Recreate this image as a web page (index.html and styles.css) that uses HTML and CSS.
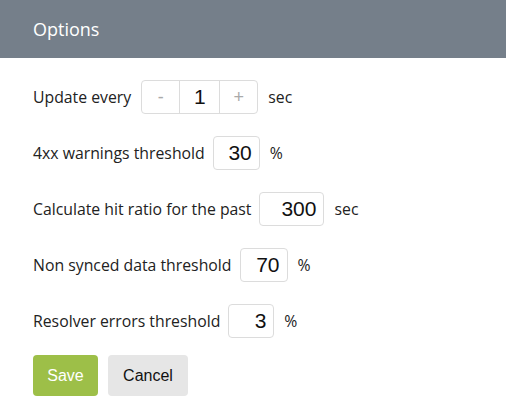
FILE: index.html
```html
<!DOCTYPE html>
<html>
<head>
<meta charset="utf-8">
<link rel="stylesheet" href="styles.css">
</head>
<body>
<div class="panel">
  <div class="header">Options</div>
  <div class="body">
    <div class="row">
      <span class="label label-stepper">Update every</span>
      <div class="stepper">
        <span class="step">-</span>
        <span class="step val">1</span>
        <span class="step">+</span>
      </div>
      <span class="unit">sec</span>
    </div>
    <div class="row">
      <span class="label">4xx warnings threshold</span>
      <span class="num" style="width:47px">30</span>
      <span class="unit">%</span>
    </div>
    <div class="row">
      <span class="label">Calculate hit ratio for the past</span>
      <span class="num" style="width:65px">300</span>
      <span class="unit">sec</span>
    </div>
    <div class="row">
      <span class="label">Non synced data threshold</span>
      <span class="num" style="width:48px">70</span>
      <span class="unit">%</span>
    </div>
    <div class="row">
      <span class="label">Resolver errors threshold</span>
      <span class="num" style="width:46px">3</span>
      <span class="unit">%</span>
    </div>
    <div class="actions">
      <button class="btn save">Save</button>
      <button class="btn cancel">Cancel</button>
    </div>
  </div>
</div>
</body>
</html>
```
FILE: styles.css
```css
html, body {
  margin: 0;
  padding: 0;
  background: #fff;
}
.panel {
  width: 506px;
  font-family: "Open Sans", sans-serif;
  color: #222;
}
.header {
  height: 58px;
  background: #757f8a;
  color: #fff;
  font-size: 18px;
  line-height: 58px;
  padding-left: 33px;
  box-sizing: border-box;
}
.body {
  padding: 22px 33px 0 33px;
  display: flex;
  flex-direction: column;
  gap: 22px;
}
.row {
  display: flex;
  align-items: center;
  height: 34px;
  font-size: 15.8px;
}
.label {
  margin-right: 8px;
}
.label-stepper {
  margin-right: 10px;
}
.stepper {
  display: flex;
  height: 34px;
  border: 1px solid #dcdcdc;
  border-radius: 4px;
  box-sizing: border-box;
}
.step {
  width: 37px;
  display: flex;
  align-items: center;
  justify-content: center;
  color: #aaa;
  font-family: "Liberation Sans", Arial, sans-serif;
  font-size: 18px;
}
.step + .step {
  border-left: 1px solid #dcdcdc;
}
.step.val {
  width: 39px;
  color: #111;
  font-size: 21px;
}
.num {
  height: 34px;
  box-sizing: border-box;
  border: 1px solid #dcdcdc;
  border-radius: 4px;
  display: flex;
  align-items: center;
  justify-content: flex-end;
  padding-right: 7px;
  font-family: "Liberation Sans", Arial, sans-serif;
  font-size: 21px;
  color: #111;
}
.unit {
  margin-left: 10px;
}
.actions {
  display: flex;
  gap: 10px;
  margin-top: -5px;
}
.btn {
  height: 41px;
  border: none;
  border-radius: 4px;
  font-family: "Liberation Sans", Arial, sans-serif;
  font-size: 16px;
  padding: 0;
}
.save {
  width: 65px;
  background: #9dbf48;
  color: #fff;
}
.cancel {
  width: 80px;
  background: #e6e6e6;
  color: #111;
}
```
